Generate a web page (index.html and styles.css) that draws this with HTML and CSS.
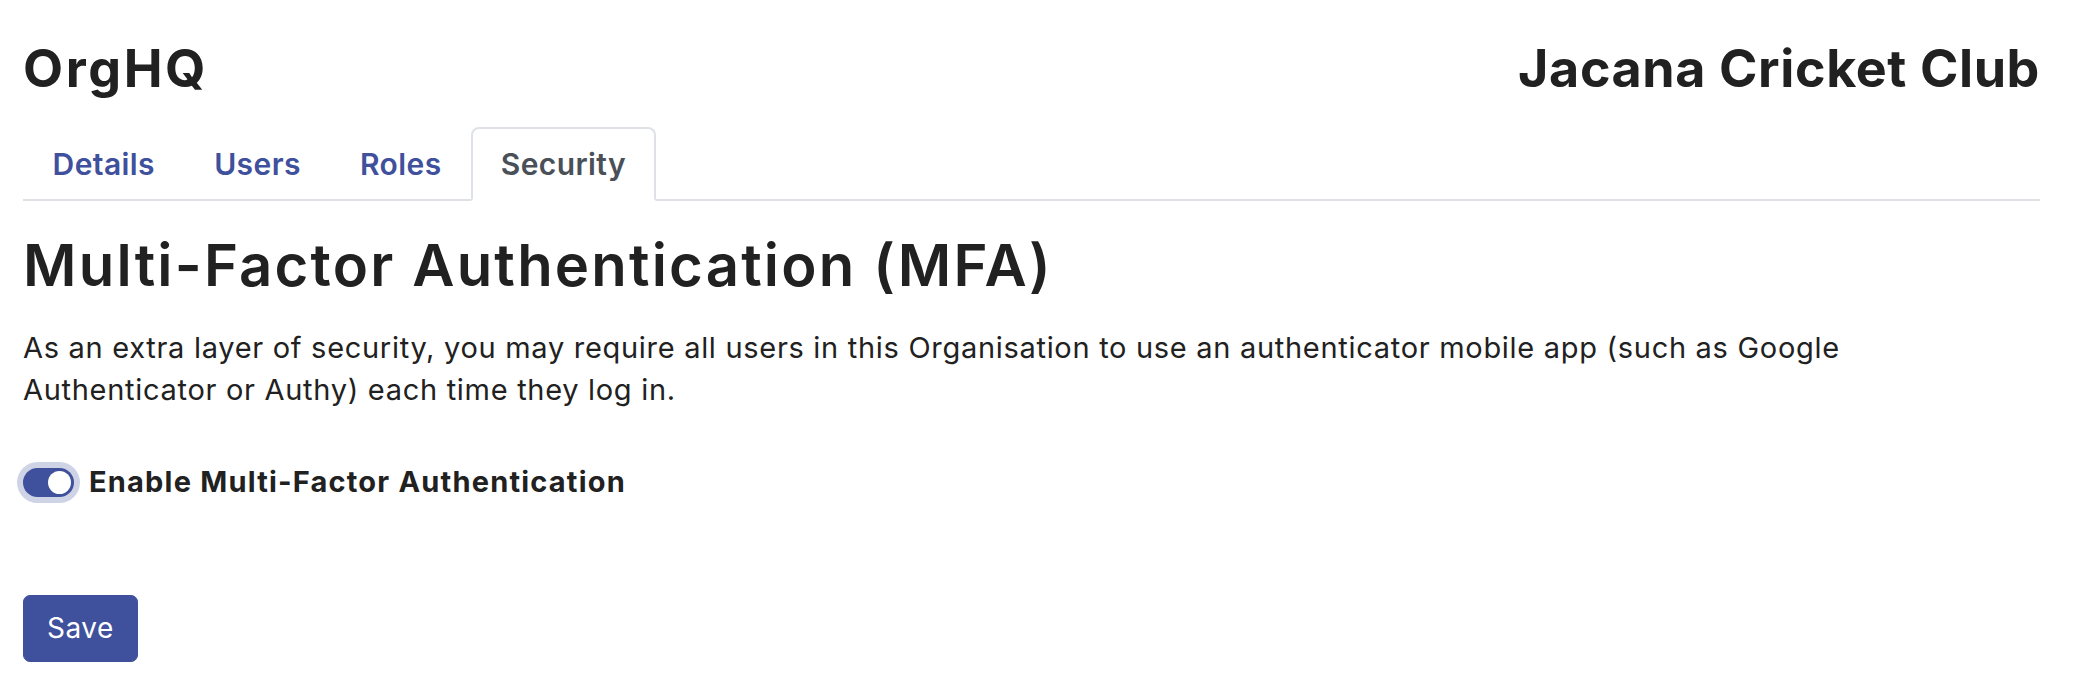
FILE: index.html
```html
<!DOCTYPE html>
<html lang="en">
<head>
<meta charset="utf-8">
<title>OrgHQ - Security</title>
<link rel="stylesheet" href="styles.css">
</head>
<body>
<div class="page">
  <header class="topbar">
    <h1 class="brand">OrgHQ</h1>
    <div class="org">Jacana Cricket Club</div>
  </header>
  <nav class="tabs">
    <a class="tab" href="#">Details</a>
    <a class="tab" href="#">Users</a>
    <a class="tab" href="#">Roles</a>
    <a class="tab active" href="#">Security</a>
  </nav>
  <section class="content">
    <h2 class="title">Multi-Factor Authentication (MFA)</h2>
    <p class="lead">As an extra layer of security, you may require all users in this Organisation to use an authenticator mobile app (such as Google Authenticator or Authy) each time they log in.</p>
    <label class="switch-row">
      <span class="switch"><span class="knob"></span></span>
      <span class="switch-label">Enable Multi-Factor Authentication</span>
    </label>
    <div class="actions">
      <button class="btn" type="button">Save</button>
    </div>
  </section>
</div>
</body>
</html>
```

FILE: styles.css
```css
* { box-sizing: border-box; }

html, body {
  margin: 0;
  background: #ffffff;
}

body {
  font-family: Inter, "Noto Sans", sans-serif;
  color: #212529;
}

.page {
  padding: 0 36px 0 23px;
}

.topbar {
  display: flex;
  justify-content: space-between;
  align-items: baseline;
  padding-top: 39px;
  height: 127px;
}

.brand {
  margin: 0;
  font-size: 52px;
  line-height: 60px;
  font-weight: 700;
  color: #212121;
  letter-spacing: 2.6px;
}

.org {
  font-size: 52px;
  line-height: 60px;
  font-weight: 700;
  color: #212121;
  letter-spacing: 0.6px;
}

.tabs {
  display: flex;
  border-bottom: 2px solid #dee2e6;
  height: 74px;
}

.tab {
  display: flex;
  align-items: center;
  padding: 0 27.6px;
  margin-bottom: -2px;
  font-size: 30px;
  font-weight: 600;
  letter-spacing: 0.4px;
  color: #3f509c;
  text-decoration: none;
  border: 2px solid transparent;
  border-top-left-radius: 8px;
  border-top-right-radius: 8px;
}

.tab.active {
  color: #495057;
  background: #ffffff;
  border-color: #dee2e6 #dee2e6 #ffffff;
}

.content {
  padding-top: 30px;
}

.title {
  margin: 0;
  font-size: 58px;
  line-height: 68px;
  font-weight: 600;
  color: #212121;
  letter-spacing: 2.2px;
}

.lead {
  max-width: 1880px;
  margin: 28px 0 0;
  font-size: 29px;
  line-height: 42px;
  font-weight: 400;
  color: #212121;
  letter-spacing: 0.7px;
}

.switch-row {
  display: flex;
  align-items: center;
  gap: 15px;
  margin-top: 50px;
}

.switch {
  display: flex;
  align-items: center;
  justify-content: flex-end;
  flex: none;
  width: 51px;
  height: 29px;
  padding: 0 3px;
  border-radius: 15px;
  background: #3f509c;
  box-shadow: 0 0 0 6px rgba(63, 80, 156, 0.25);
}

.knob {
  width: 23px;
  height: 23px;
  border-radius: 50%;
  background: #ffffff;
}

.switch-label {
  font-size: 29px;
  line-height: 42px;
  font-weight: 700;
  color: #212121;
  letter-spacing: 1.2px;
}

.actions {
  margin-top: 92px;
}

.btn {
  font-family: Inter, "Noto Sans", sans-serif;
  font-size: 28px;
  line-height: 41px;
  font-weight: 400;
  color: #ffffff;
  background: #3f509c;
  border: 1px solid #3f509c;
  border-radius: 7px;
  padding: 12px 23px;
  letter-spacing: 0.5px;
  cursor: pointer;
}
```
